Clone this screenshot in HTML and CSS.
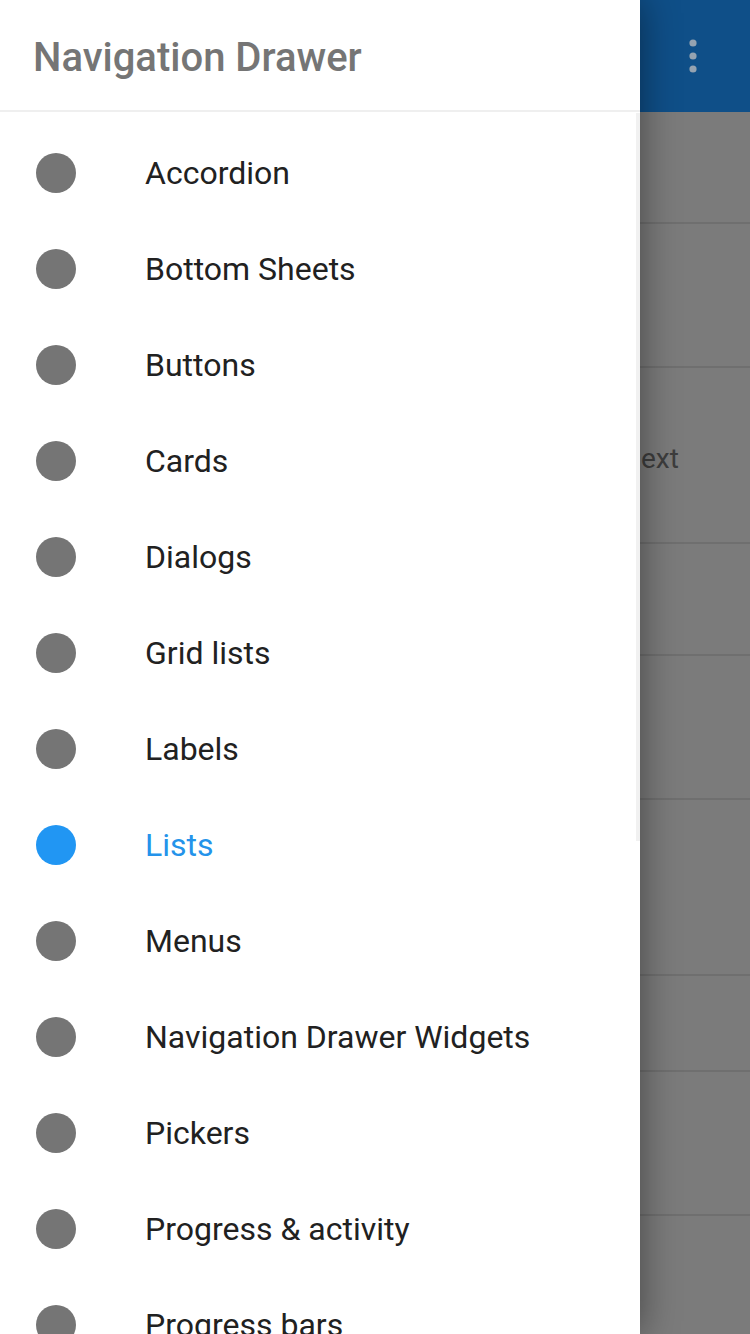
FILE: index.html
```html
<!DOCTYPE html>
<html lang="en">
<head>
  <meta charset="UTF-8">
  <title>Navigation Drawer</title>
  <meta name="viewport" content="width=750">
  <link rel="stylesheet" href="styles.css">
</head>
<body>

<div class="screen">
  <aside class="drawer">
    <div class="drawer-header">
      <h1>Navigation Drawer</h1>
    </div>

    <ul class="nav-list">
      <li class="nav-item"><span class="dot"></span>Accordion</li>
      <li class="nav-item"><span class="dot"></span>Bottom Sheets</li>
      <li class="nav-item"><span class="dot"></span>Buttons</li>
      <li class="nav-item"><span class="dot"></span>Cards</li>
      <li class="nav-item"><span class="dot"></span>Dialogs</li>
      <li class="nav-item"><span class="dot"></span>Grid lists</li>
      <li class="nav-item"><span class="dot"></span>Labels</li>
      <li class="nav-item active"><span class="dot"></span>Lists</li>
      <li class="nav-item"><span class="dot"></span>Menus</li>
      <li class="nav-item"><span class="dot"></span>Navigation Drawer Widgets</li>
      <li class="nav-item"><span class="dot"></span>Pickers</li>
      <li class="nav-item"><span class="dot"></span>Progress &amp; activity</li>
      <li class="nav-item"><span class="dot"></span>Progress bars</li>
    </ul>

    <div class="scrollbar"></div>
  </aside>

  <!-- page behind the drawer, dimmed -->
  <main class="backdrop">
    <div class="appbar">
      <svg class="more-icon" width="14" height="36" viewBox="0 0 14 36">
        <circle cx="7" cy="5" r="3.6"/>
        <circle cx="7" cy="18" r="3.6"/>
        <circle cx="7" cy="31" r="3.6"/>
      </svg>
    </div>
    <div class="row h112"></div>
    <div class="row h144"></div>
    <div class="row h176"><span class="row-text">ext</span></div>
    <div class="row h112"></div>
    <div class="row h144"></div>
    <div class="row h176"></div>
    <div class="row h96"></div>
    <div class="row h144"></div>
    <div class="row last"></div>
  </main>
</div>

</body>
</html>
```

FILE: styles.css
```css
* {
  box-sizing: border-box;
  font-family: Roboto, "Liberation Sans", sans-serif;
}

body {
  margin: 0;
  width: 750px;
  height: 1334px;
  overflow: hidden;
  background: #7b7b7b;
}

.screen {
  display: flex;
  height: 1334px;
}

.drawer {
  position: relative;
  z-index: 1;
  width: 640px;
  flex-shrink: 0;
  background: #fff;
  box-shadow: 0 0 36px rgba(0,0,0,0.45);
  overflow: hidden;
}

.drawer-header {
  height: 112px;
  padding-left: 33px;
  display: flex;
  align-items: center;
  border-bottom: 2px solid #efefef;
}

.drawer-header h1 {
  margin: 0;
  font-size: 40px;
  font-weight: 500;
  color: #757575;
  padding-top: 4px;
}

.nav-list {
  list-style: none;
  margin: 0;
  padding: 13px 0 0;
}

.nav-item {
  height: 96px;
  display: flex;
  align-items: center;
  padding-left: 36px;
  font-size: 32px;
  color: #212121;
}

.nav-item .dot {
  width: 40px;
  height: 40px;
  border-radius: 50%;
  background: #757575;
  margin-right: 69px;
  flex-shrink: 0;
}

.nav-item.active {
  color: #2493ea;
}

.nav-item.active .dot {
  background: #2196f3;
}

.scrollbar {
  position: absolute;
  top: 113px;
  right: 0;
  width: 4px;
  height: 728px;
  background: #f1f1f1;
}

.backdrop {
  flex: 1;
  background: #7b7b7b;
}

.appbar {
  height: 112px;
  background: #0f4f88;
  display: flex;
  justify-content: flex-end;
  align-items: center;
  padding-right: 50px;
}

.more-icon circle {
  fill: #95a3b1;
}

.row {
  border-bottom: 2px solid #6f6f6f;
  display: flex;
  align-items: center;
}

.h96 { height: 96px; }
.h112 { height: 112px; }
.h144 { height: 144px; }
.h176 { height: 176px; }

.row.last {
  border-bottom: none;
  height: 118px;
}

.row-text {
  font-size: 28px;
  color: #3d3d3d;
  padding-left: 1px;
  padding-top: 6px;
}
```
